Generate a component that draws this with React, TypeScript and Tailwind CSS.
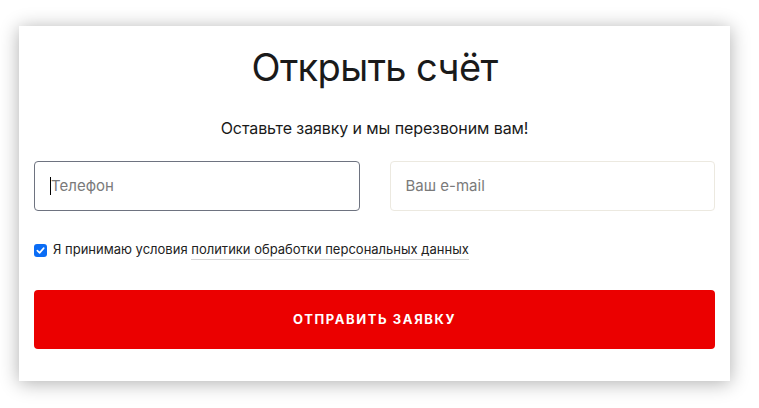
import React from "react";

export default function App() {
  return (
    <div className="w-[759px] h-[408px] bg-white pt-[26px] pl-[19px]" style={{ fontFamily: "Inter, 'Noto Sans', sans-serif" }}>
      <div className="w-[711px] h-[355px] bg-white shadow-[0_2px_18px_rgba(0,0,0,0.32)] px-[15px] pt-[17px] flex flex-col">
        <h1 className="text-center text-[38px] leading-[48px] tracking-[-0.6px] text-[#1a1a1a] font-normal">Открыть счёт</h1>
        <p className="mt-[27px] text-center text-[16px] leading-[20px] tracking-[-0.1px] text-[#1a1a1a]">Оставьте заявку и мы перезвоним вам!</p>
        <div className="mt-[23px] flex gap-[30px]">
          <div className="w-[326px] h-[50px] rounded-[4px] border border-[#6e7380] flex items-center pl-[15px]">
            <span className="w-px h-[18px] bg-black"></span>
            <span className="text-[15px] text-[#7a7a7a]">Телефон</span>
          </div>
          <div className="w-[326px] h-[50px] rounded-[4px] border border-[#ece9e0] flex items-center pl-[15px]">
            <span className="text-[15px] text-[#7a7a7a]">Ваш e-mail</span>
          </div>
        </div>
        <div className="mt-[31px] flex items-center h-[16px]">
          <span className="w-[13px] h-[13px] rounded-[3px] bg-[#0a6cf5] flex items-center justify-center">
            <svg width="9" height="9" viewBox="0 0 10 10"><path d="M1.5 5.2 L4 7.6 L8.6 2.4" stroke="white" strokeWidth="1.8" fill="none" strokeLinecap="round" strokeLinejoin="round" /></svg>
          </span>
          <span className="ml-[6px] text-[13px] text-[#222]">Я принимаю условия <span className="border-b border-[#d6d6d6] pb-[2px]">политики обработки персональных данных</span></span>
        </div>
        <button className="mt-[32px] w-full h-[59px] rounded-[4px] bg-[#eb0000] text-white text-[13px] font-bold tracking-[1.6px]">ОТПРАВИТЬ ЗАЯВКУ</button>
      </div>
    </div>
  );
}
